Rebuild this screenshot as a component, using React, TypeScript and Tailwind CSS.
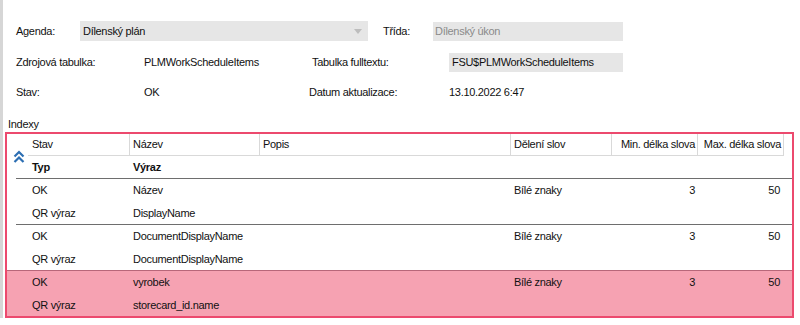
import React from "react";

const font = { fontFamily: '"Liberation Sans", Arial, sans-serif' };

function ChevronsUp() {
  return (
    <svg width="12" height="14" viewBox="0 0 12 14" fill="none">
      <path d="M1.5 6.5 L6 2 L10.5 6.5" stroke="#2d6fb3" strokeWidth="2.2" />
      <path d="M1.5 12 L6 7.5 L10.5 12" stroke="#2d6fb3" strokeWidth="2.2" />
    </svg>
  );
}

type Rec = { stav: string; nazev: string; typ: string; vyraz: string; sel?: boolean };

const recs: Rec[] = [
  { stav: "OK", nazev: "Název", typ: "QR výraz", vyraz: "DisplayName" },
  { stav: "OK", nazev: "DocumentDisplayName", typ: "QR výraz", vyraz: "DocumentDisplayName" },
  { stav: "OK", nazev: "vyrobek", typ: "QR výraz", vyraz: "storecard_id.name", sel: true },
];

export default function App() {
  return (
    <div
      className="w-[800px] h-[325px] bg-white flex text-[11px] tracking-[-0.3px] text-[#111111] overflow-hidden"
      style={font}
    >
      <div className="w-[3px] h-[318px] bg-[#d6d6d6] shrink-0" />
      <div className="flex-1 flex flex-col">
        {/* form */}
        <div className="pl-[13px] pt-[21px] flex flex-col">
          <div className="flex items-center h-[20px]">
            <div className="w-[64px]">Agenda:</div>
            <div className="w-[288px] h-[20px] bg-[#e6e6e6] flex items-center pl-[3px] pr-[6px] justify-between">
              <span>Dílenský plán</span>
              <svg width="8" height="5" viewBox="0 0 8 5">
                <path d="M0 0 L8 0 L4 5 Z" fill="#bdbdbd" />
              </svg>
            </div>
            <div className="w-[15px]" />
            <div className="w-[50px]">Třída:</div>
            <div className="w-[190px] h-[19px] bg-[#e6e6e6] flex items-center pl-[2px] text-[#8a8a8a]">
              Dílenský úkon
            </div>
          </div>
          <div className="flex items-center h-[19px] mt-[12px]">
            <div className="w-[128px]">Zdrojová tabulka:</div>
            <div className="w-[168px]">PLMWorkScheduleItems</div>
            <div className="w-[137px]">Tabulka fulltextu:</div>
            <div className="w-[174px] h-[19px] bg-[#e6e6e6] flex items-center pl-[3px]">
              FSU$PLMWorkScheduleItems
            </div>
          </div>
          <div className="flex items-center h-[20px] mt-[10px]">
            <div className="w-[128px]">Stav:</div>
            <div className="w-[165px]">OK</div>
            <div className="w-[140px]">Datum aktualizace:</div>
            <div>13.10.2022 6:47</div>
          </div>
        </div>
        <div className="pl-[5px] mt-[14px] h-[16px] flex items-center">Indexy</div>
        {/* grid */}
        <div className="relative">
          <div className="ml-[2px] w-[789px] border-2 border-[#ec4a6e] flex flex-col">
            <div className="flex">
              <div className="w-[21px] flex items-center justify-center pt-[2px] pl-[2px]">
                <ChevronsUp />
              </div>
              <div className="flex flex-col">
                <div className="flex h-[22px] border-b border-[#d9d9d9] border-r">
                  <div className="w-[102px] pl-[4px] flex items-center border-r border-[#d9d9d9]">Stav</div>
                  <div className="w-[130px] pl-[3px] flex items-center border-r border-[#d9d9d9]">Název</div>
                  <div className="w-[251px] pl-[3px] flex items-center border-r border-[#d9d9d9]">Popis</div>
                  <div className="w-[101px] pl-[3px] flex items-center border-r border-[#d9d9d9]">Dělení slov</div>
                  <div className="w-[86px] pr-[2px] flex items-center justify-end border-r border-[#d9d9d9]">Min. délka slova</div>
                  <div className="w-[85px] pr-[2px] flex items-center justify-end">Max. délka slova</div>
                </div>
                <div className="flex h-[22px] font-bold">
                  <div className="w-[102px] pl-[4px] flex items-center">Typ</div>
                  <div className="w-[130px] pl-[3px] flex items-center">Výraz</div>
                </div>
              </div>
            </div>
            {recs.map((r, i) => (
              <div
                key={i}
                className={
                  "flex flex-col border-t " +
                  (r.sel ? "bg-[#f6a2b2] border-[#b8677a] pl-[9px]" : "ml-[9px] border-[#6e6e6e]")
                }
              >
                <div className="flex h-[23px] items-center">
                  <div className="w-[12px]" />
                  <div className="w-[102px] pl-[4px]">{r.stav}</div>
                  <div className="w-[130px] pl-[3px]">{r.nazev}</div>
                  <div className="w-[251px]" />
                  <div className="w-[101px] pl-[3px]">Bílé znaky</div>
                  <div className="w-[86px] pr-[3px] text-right">3</div>
                  <div className="w-[85px] pr-[3px] text-right">50</div>
                </div>
                <div className="flex h-[22px] items-center">
                  <div className="w-[12px]" />
                  <div className="w-[102px] pl-[4px]">{r.typ}</div>
                  <div className="w-[130px] pl-[3px]">{r.vyraz}</div>
                </div>
              </div>
            ))}
          </div>
        </div>
      </div>
    </div>
  );
}
